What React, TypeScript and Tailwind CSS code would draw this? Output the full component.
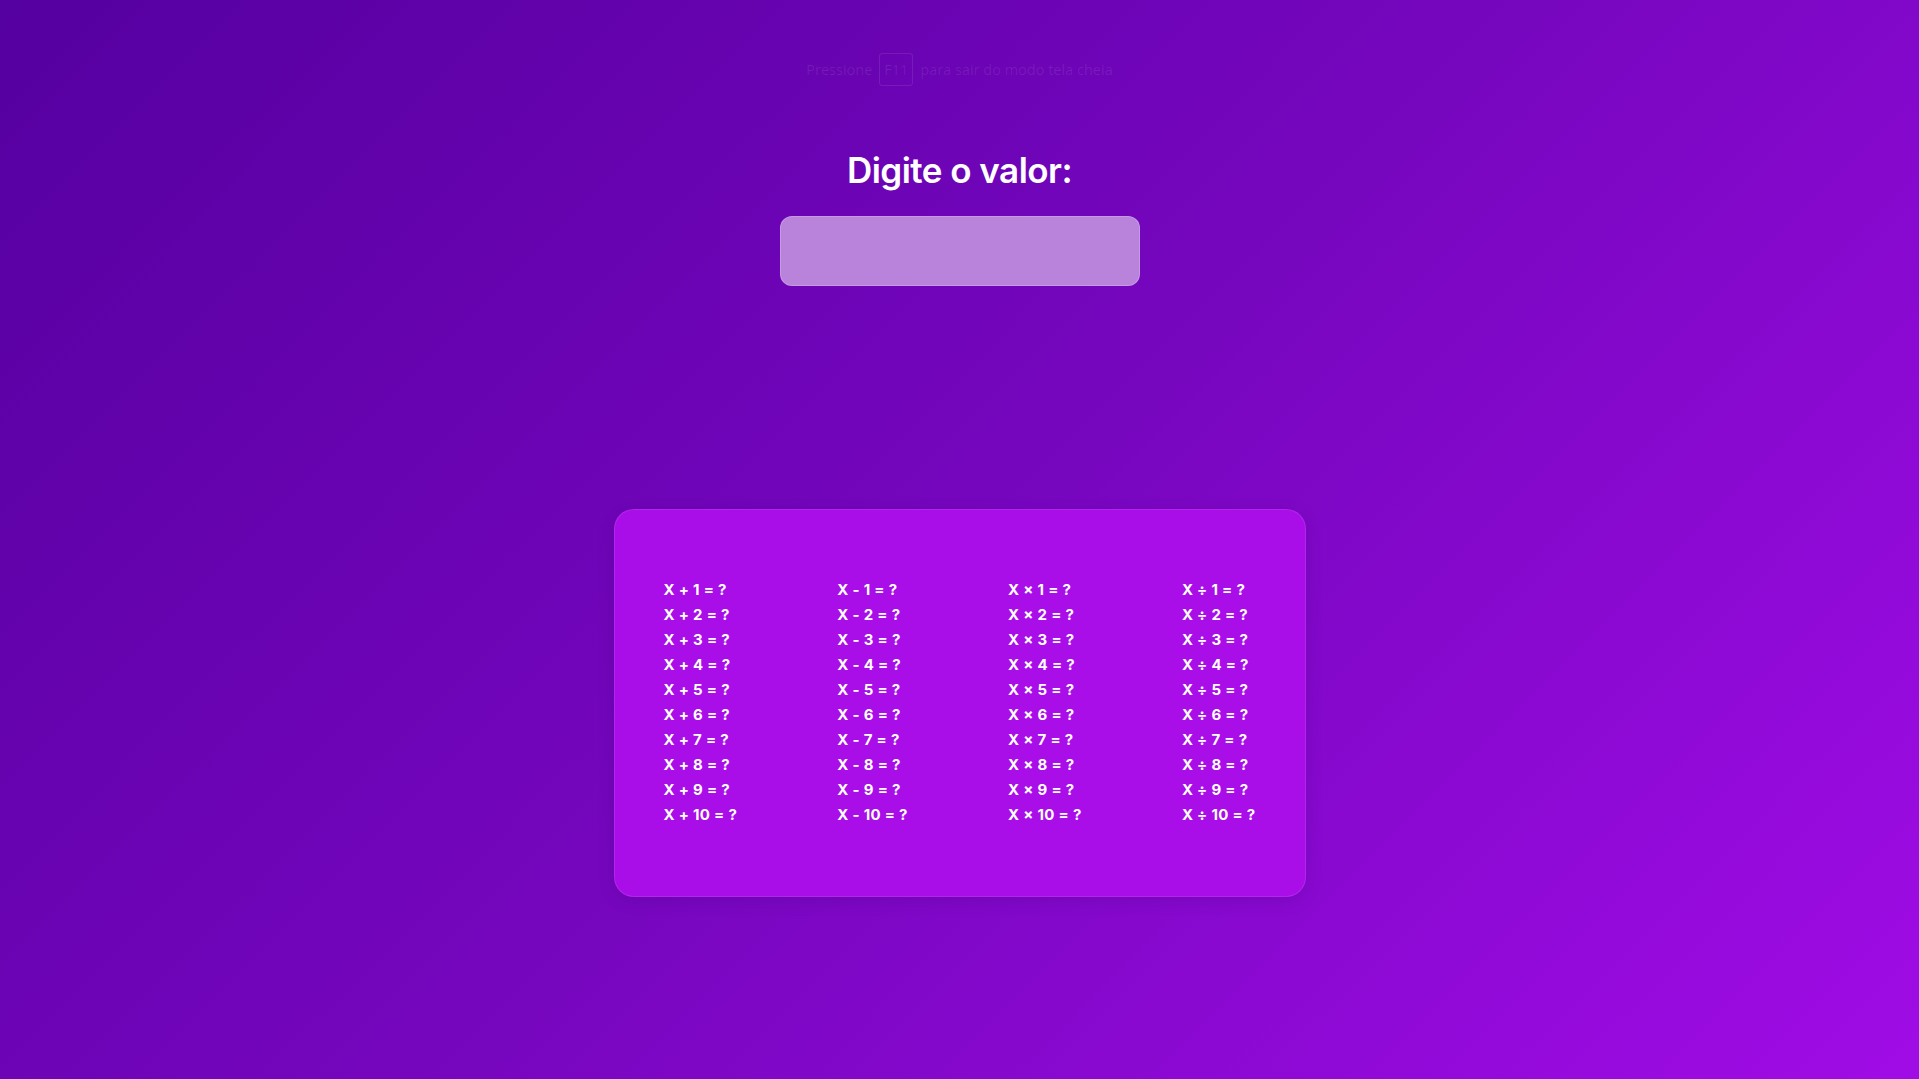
import React from "react";

const ops = ["+", "-", "×", "÷"];
const nums = [1, 2, 3, 4, 5, 6, 7, 8, 9, 10];

export default function App() {
  return (
    <div className="min-h-screen w-full bg-[linear-gradient(135deg,#5500a0_0%,#7606be_50%,#a00ce6_100%)] flex flex-col items-center font-['Inter',sans-serif]">
      <div className="mt-[53px] h-[33px] flex items-center text-[14.5px] text-white/[0.09] font-['Open_Sans',sans-serif]">
        <span>Pressione</span>
        <span className="mx-[7px] h-[33px] w-[34px] flex items-center justify-center rounded-[3px] border border-white/[0.09]">F11</span>
        <span>para sair do modo tela cheia</span>
      </div>
      <h1 className="mt-[63px] h-[42px] leading-[42px] text-[35px] font-semibold tracking-[-0.015em] text-white">
        Digite o valor:
      </h1>
      <input
        type="text"
        className="mt-[25px] h-[70px] w-[360px] rounded-[12px] bg-[#b983dc] border border-white/20 outline-none text-white text-2xl text-center"
      />
      <div className="mt-[223px] w-[692px] h-[388px] rounded-[20px] bg-[#a90de8] border border-white/10 shadow-[0_4px_16px_rgba(60,0,110,0.2)] pl-[49px] pr-[49px] pb-[3px] flex items-center justify-between">
        {ops.map((op) => (
          <div key={op} className="flex flex-col">
            {nums.map((n) => (
              <div key={n} className="h-[25px] leading-[25px] text-[15px] font-bold tracking-[0.02em] text-white whitespace-pre">
                {`X ${op} ${n} = ?`}
              </div>
            ))}
          </div>
        ))}
      </div>
    </div>
  );
}
